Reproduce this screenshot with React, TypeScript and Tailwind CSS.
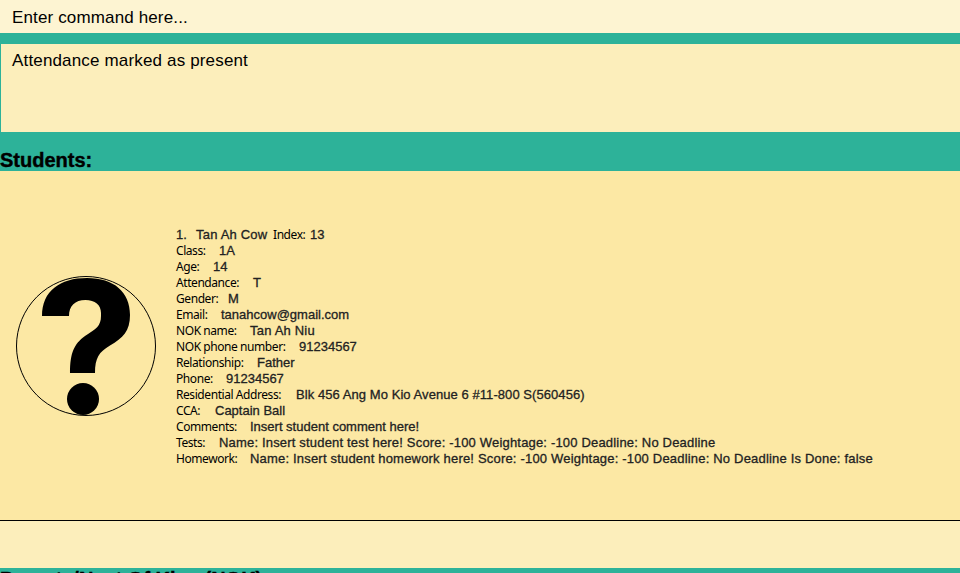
type Field = { label: string; value: string; labelClass: string; valueClass: string };

const fields: Field[] = [
  { label: 'Class:', value: '1A', labelClass: 'w-[43px]', valueClass: '' },
  { label: 'Age:', value: '14', labelClass: 'w-[37px]', valueClass: '' },
  { label: 'Attendance:', value: 'T', labelClass: 'w-[77px]', valueClass: '' },
  { label: 'Gender:', value: 'M', labelClass: 'w-[52px]', valueClass: '' },
  { label: 'Email:', value: 'tanahcow@gmail.com', labelClass: 'w-[45px]', valueClass: '' },
  { label: 'NOK name:', value: 'Tan Ah Niu', labelClass: 'w-[74px]', valueClass: 'tracking-[0.2px]' },
  { label: 'NOK phone number:', value: '91234567', labelClass: 'w-[123px]', valueClass: '' },
  { label: 'Relationship:', value: 'Father', labelClass: 'w-[81px]', valueClass: '' },
  { label: 'Phone:', value: '91234567', labelClass: 'w-[50px]', valueClass: '' },
  { label: 'Residential Address:', value: 'Blk 456 Ang Mo Kio Avenue 6 #11-800 S(560456)', labelClass: 'w-[120px]', valueClass: 'tracking-[0.065px]' },
  { label: 'CCA:', value: 'Captain Ball', labelClass: 'w-[39px]', valueClass: '' },
  { label: 'Comments:', value: 'Insert student comment here!', labelClass: 'w-[74px]', valueClass: '' },
  { label: 'Tests:', value: 'Name: Insert student test here! Score: -100 Weightage: -100 Deadline: No Deadline', labelClass: 'w-[43px]', valueClass: 'tracking-[0.18px]' },
  { label: 'Homework:', value: 'Name: Insert student homework here! Score: -100 Weightage: -100 Deadline: No Deadline Is Done: false', labelClass: 'w-[74px]', valueClass: 'tracking-[0.19px]' },
];

const labelFont = "shrink-0 font-['Noto_Sans',sans-serif] text-[12px] tracking-[-0.43px] text-black";
const valueFont = "shrink-0 font-['Liberation_Sans',sans-serif] text-[13px] text-[#222] [-webkit-text-stroke:0.3px_#222]";
const headingFont = 'shrink-0 text-[20px] font-bold [-webkit-text-stroke:0.4px_#000]';

function Avatar() {
  return (
    <svg className="h-[142px] w-[142px] shrink-0" viewBox="15 275 142 142" aria-label="No photo">
      <circle cx="86" cy="346" r="69.5" fill="none" stroke="#000" strokeWidth="1" />
      <path d="M42 316C42 291 60 278 87 278C114 278 130 292 130 315C130 331 123 338 110 345.500C99 352 95 358 95 373H70C70 353 74 344 85 336C96 329 101 326 101 316V313C101 305 95 300 85.500 300C75 300 69 306 69 316Z" fill="#000" />
      <circle cx="83" cy="399" r="16" fill="#000" />
    </svg>
  );
}

export default function App() {
  return (
    <div className="flex h-[573px] w-[960px] flex-col overflow-hidden bg-[#2db299] font-['Liberation_Sans',sans-serif] text-black">
      <div className="h-[33px] shrink-0 bg-[#fdf4d2] pl-3 text-[17px] leading-[35px] tracking-[0.14px]">Enter command here...</div>
      <div className="mt-[11px] ml-px h-[88px] shrink-0 bg-[#fceebb] pl-[11px] text-[17px] leading-[33px] tracking-[0.16px]">Attendance marked as present</div>
      <h2 className={`${headingFont} mt-4 h-[23px] leading-[24px]`}>Students:</h2>
      <section className="flex h-[350px] shrink-0 items-center border-b border-black bg-[#fce8a4] pl-[15px]">
        <Avatar />
        <div className="mt-0.5 ml-[19px] flex flex-col whitespace-nowrap">
          <div className="flex h-4 items-center">
            <span className={`${valueFont} w-5`}>1.</span>
            <span className={`${valueFont} w-[77px] tracking-[0.2px]`}>Tan Ah Cow</span>
            <span className={`${labelFont} w-[37px]`}>Index:</span>
            <span className={valueFont}>13</span>
          </div>
          {fields.map((f) => (
            <div key={f.label} className="flex h-4 items-center">
              <span className={`${labelFont} ${f.labelClass}`}>{f.label}</span>
              <span className={`${valueFont} ${f.valueClass}`}>{f.value}</span>
            </div>
          ))}
        </div>
      </section>
      <div className="h-[47px] shrink-0 bg-[#fceebb]" />
      <h2 className={`${headingFont} leading-[23px]`}>Parents/Next Of Kins (NOK):</h2>
    </div>
  );
}
